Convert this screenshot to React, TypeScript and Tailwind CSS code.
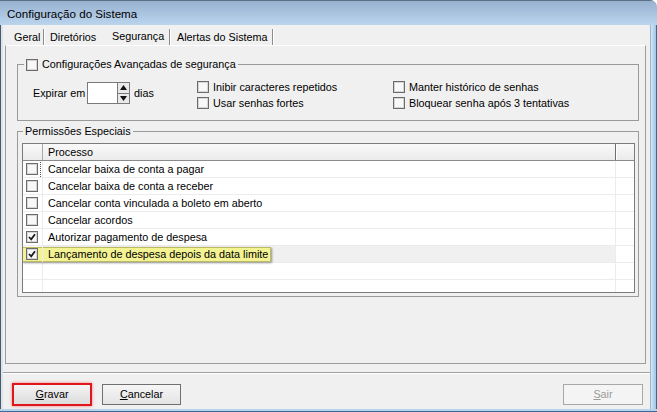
import React from 'react';

type Row = { label: string; checked: boolean; highlight?: boolean };

const rows: Row[] = [
  { label: 'Cancelar baixa de conta a pagar', checked: false },
  { label: 'Cancelar baixa de conta a receber', checked: false },
  { label: 'Cancelar conta vinculada a boleto em aberto', checked: false },
  { label: 'Cancelar acordos', checked: false },
  { label: 'Autorizar pagamento de despesa', checked: true },
  { label: 'Lançamento de despesa depois da data limite', checked: true, highlight: true },
];

const CheckBox = ({ checked = false }: { checked?: boolean }) => (
  <span className="flex items-center justify-center w-[12px] h-[12px] shrink-0 border border-[#6b6b6b] bg-[#f8f8f8] shadow-[inset_0_0_0_1px_#d6d6d6]">
    {checked && (
      <svg width="8" height="8" viewBox="0 0 8 8">
        <path d="M1 4 L3.2 6.3 L7 1.3" fill="none" stroke="#1a1a1a" strokeWidth="1.8" />
      </svg>
    )}
  </span>
);

const TabSep = () => (
  <span className="mt-[4px] w-[2px] h-[16px] border-l border-l-[#8c8c8c] border-r border-r-white" />
);

const Option = ({ label }: { label: string }) => (
  <div className="flex items-center h-[16px] gap-[4px]">
    <CheckBox />
    <span>{label}</span>
  </div>
);

export default function App() {
  return (
    <div className="w-[657px] h-[412px] flex flex-col overflow-hidden rounded-tr-[7px] bg-[#c3d9ee] text-[10.8px] leading-[13px] text-black font-['Liberation_Sans',Arial,sans-serif]">
      {/* title bar */}
      <div className="h-[25px] shrink-0 flex items-center pl-[7px] border-t border-[#5b6f85] bg-gradient-to-b from-[#98b1cf] to-[#bbd4ee]">
        <span className="text-[11.6px]">Configuração do Sistema</span>
      </div>

      <div className="flex flex-1 min-h-0">
        <div className="w-[3px] border-l border-[#4b5866] bg-[#dbe4ee]" />

        <div className="w-[647px] flex flex-col bg-[#f0f0f0]">
          {/* tabs */}
          <div className="flex items-start h-[20px] pl-[11px]">
            <span className="w-[29px] pt-[6px]">Geral</span>
            <TabSep />
            <span className="w-[67px] pl-[5px] pt-[6px]">Diretórios</span>
            <span className="w-[57px] pt-[5px]">Segurança</span>
            <TabSep />
            <span className="w-[101px] pl-[6px] pt-[6px]">Alertas do Sistema</span>
            <TabSep />
          </div>

          {/* tab page */}
          <div className="ml-[2px] w-[641px] h-[319px] border border-[#9c9c9c] border-t-white flex flex-col">
            <fieldset className="m-0 p-0 min-w-0 ml-[11px] mr-[6px] mt-[12px] border border-[#9a9a9a]">
              <legend className="ml-[6px] px-[2px] h-[13px] flex items-center gap-[4px]">
                <CheckBox />
                <span>Configurações Avançadas de segurança</span>
              </legend>
              <div className="h-[49px] flex items-start pl-[15px]">
                <div className="w-[164px] mt-[11px] h-[22px] flex items-center">
                  <span className="w-[54px]">Expirar em</span>
                  <span className="w-[31px] h-[22px] border border-[#7a7a7a] bg-white" />
                  <span className="w-[12px] h-[22px] flex flex-col border border-[#7a7a7a] border-l-0 bg-[#e9e9e9]">
                    <span className="flex-1 flex items-center justify-center border-b border-[#7a7a7a]">
                      <svg width="7" height="5" viewBox="0 0 7 5"><path d="M0 5 L3.5 0 L7 5 Z" fill="#111" /></svg>
                    </span>
                    <span className="flex-1 flex items-center justify-center">
                      <svg width="7" height="5" viewBox="0 0 7 5"><path d="M0 0 L7 0 L3.5 5 Z" fill="#111" /></svg>
                    </span>
                  </span>
                  <span className="ml-[4px]">dias</span>
                </div>
                <div className="w-[196px] mt-[8px] flex flex-col">
                  <Option label="Inibir caracteres repetidos" />
                  <Option label="Usar senhas fortes" />
                </div>
                <div className="mt-[8px] flex flex-col">
                  <Option label="Manter histórico de senhas" />
                  <Option label="Bloquear senha após 3 tentativas" />
                </div>
              </div>
            </fieldset>

            <fieldset className="m-0 p-0 min-w-0 ml-[11px] mr-[6px] mt-[4px] border border-[#9a9a9a]">
              <legend className="ml-[5px] px-[2px] h-[13px]">Permissões Especiais</legend>
              <div className="ml-[4px] mt-[5px] mb-[3px] w-[613px] h-[150px] border border-[#7b7b7b] bg-white flex flex-col overflow-hidden">
                <div className="flex h-[17px] shrink-0 border-b border-[#8a8a8a] bg-gradient-to-b from-[#f9f9f9] to-[#ebebeb]">
                  <span className="w-[20px] border-r border-[#a9a9a9]" />
                  <span className="w-[573px] pl-[5px] pt-[2px] border-r border-[#6f6f6f] shadow-[1px_0_0_#fff]">Processo</span>
                  <span className="flex-1" />
                </div>
                {rows.map((row, i) => (
                  <div key={row.label} className="relative flex h-[17px] shrink-0 border-b border-[#ececec]">
                    {row.highlight && (
                      <span className="absolute left-[-1px] top-[1px] w-[249px] h-[15px] bg-[#f3f394] border border-[#bdbb62] shadow-[1px_1px_2px_rgba(0,0,0,0.4)]" />
                    )}
                    <span className="relative w-[20px] pl-[3px] flex items-center border-r border-[#ececec]">
                      <CheckBox checked={row.checked} />
                      {i === 0 && <span className="ml-[2px] h-[15px] border-l border-dotted border-[#555]" />}
                    </span>
                    <span className={`w-[573px] pl-[5px] flex items-center border-r border-[#ececec] ${row.highlight ? 'bg-[#f0f0f0]' : ''}`}>
                      <span className="relative">{row.label}</span>
                    </span>
                    <span className="flex-1" />
                  </div>
                ))}
                {[0, 1].map((n) => (
                  <div key={n} className="flex h-[17px] shrink-0 border-b border-[#ececec]">
                    <span className="w-[20px] border-r border-[#ececec]" />
                    <span className="w-[573px] border-r border-[#ececec]" />
                    <span className="flex-1" />
                  </div>
                ))}
              </div>
            </fieldset>
          </div>

          {/* separator */}
          <div className="mt-[8px] h-[2px] border-t border-[#a0a0a0] border-b border-b-white" />

          {/* buttons */}
          <div className="flex items-start h-[23px] mt-[9px] pl-[9px] pr-[7px]">
            <button className="w-[80px] h-[23px] border-2 border-[#e0161c] shadow-[0_0_3px_#f08080] bg-gradient-to-b from-[#f4f4f4] to-[#dcdcdc]">
              <span className="underline underline-offset-[1px]">G</span>ravar
            </button>
            <button className="ml-[10px] mt-[1px] w-[79px] h-[21px] border border-[#707070] bg-gradient-to-b from-[#f6f6f6] to-[#e4e4e4]">
              <span className="underline underline-offset-[1px]">C</span>ancelar
            </button>
            <button className="ml-auto mt-[1px] w-[80px] h-[21px] border border-[#a8a8a8] bg-[#f4f4f4] text-[#9a9a9a]">
              <span className="underline underline-offset-[1px]">S</span>air
            </button>
          </div>
        </div>

        <div className="flex-1 border-l border-[#9bb6d0] border-r border-r-[#3b6994] bg-gradient-to-r from-[#d6e6f4] to-[#9ec6e9]" />
      </div>

      <div className="h-[3px] shrink-0 border-b border-[#3b6994] bg-[#b7d3ec]" />
    </div>
  );
}
